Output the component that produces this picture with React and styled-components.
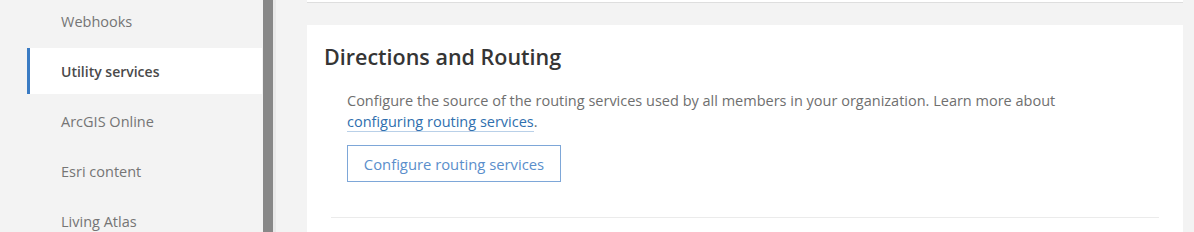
import styled, { createGlobalStyle } from "styled-components";

const Global = createGlobalStyle`
  html, body {
    margin: 0;
    padding: 0;
    background: #f3f3f3;
  }
  body {
    font-family: "Open Sans", "Noto Sans", sans-serif;
    -webkit-font-smoothing: antialiased;
  }
`;

const Page = styled.div`
  display: flex;
  height: 232px;
  overflow: hidden;
  background: #f3f3f3;
`;

const Sidebar = styled.nav`
  width: 262px;
  flex-shrink: 0;
  padding-left: 27px;
  box-sizing: border-box;
`;

const NavList = styled.ul`
  list-style: none;
  margin: -2px 0 0;
  padding: 0;
  display: flex;
  flex-direction: column;
  gap: 4px;
`;

const NavItem = styled.li`
  height: 46px;
  display: flex;
  align-items: center;
  padding-left: 31px;
  border-left: 3px solid ${({ $active }) => ($active ? "#3a7bc3" : "transparent")};
  background: ${({ $active }) => ($active ? "#ffffff" : "transparent")};
  color: ${({ $active }) => ($active ? "#4a4a4a" : "#757575")};
  font-size: ${({ $active }) => ($active ? "14px" : "14.5px")};
  font-weight: ${({ $active }) => ($active ? 600 : 400)};
`;

const Scrollbar = styled.div`
  width: 10px;
  flex-shrink: 0;
  margin-left: 1px;
  background: #888888;
  border-right: 3px solid #e9e9e9;
`;

const Main = styled.main`
  flex: 1;
  padding: 0 11px 0 31px;
  display: flex;
  flex-direction: column;
  gap: 22px;
`;

const TopCard = styled.div`
  height: 2px;
  background: #ffffff;
  border-bottom: 1px solid #dedede;
`;

const Card = styled.section`
  background: #ffffff;
  padding: 18px 24px 0 17px;
  flex: 1;
`;

const Heading = styled.h2`
  margin: 0;
  font-size: 21.5px;
  line-height: 28px;
  font-weight: 600;
  color: #353535;
`;

const Body = styled.div`
  padding-left: 23px;
  margin-top: 19px;
`;

const Text = styled.p`
  margin: 0;
  font-size: 14.5px;
  line-height: 21px;
  color: #6f6f6f;
`;

const Link = styled.a`
  color: #2f6fae;
  text-decoration: none;
  border-bottom: 1px solid #b9d0e8;
`;

const Button = styled.button`
  appearance: none;
  box-sizing: border-box;
  margin-top: 13px;
  height: 37px;
  width: 214px;
  padding: 0;
  background: #ffffff;
  border: 1px solid #7ea7d8;
  border-radius: 0;
  color: #5a8ecb;
  font-family: inherit;
  font-size: 14.8px;
  cursor: pointer;
`;

const Divider = styled.hr`
  margin: 35px 0 0 7px;
  border: none;
  border-top: 1px solid #ebebeb;
`;

const items = ["Webhooks", "Utility services", "ArcGIS Online", "Esri content", "Living Atlas"];

export default function App() {
  return (
    <>
      <Global />
      <Page>
        <Sidebar>
          <NavList>
            {items.map((label) => (
              <NavItem key={label} $active={label === "Utility services"}>
                {label}
              </NavItem>
            ))}
          </NavList>
        </Sidebar>
        <Scrollbar />
        <Main>
          <TopCard />
          <Card>
            <Heading>Directions and Routing</Heading>
            <Body>
              <Text>
                Configure the source of the routing services used by all members in your organization. Learn more about
                <br />
                <Link href="#">configuring routing services</Link>.
              </Text>
              <Button>Configure routing services</Button>
            </Body>
            <Divider />
          </Card>
        </Main>
      </Page>
    </>
  );
}
